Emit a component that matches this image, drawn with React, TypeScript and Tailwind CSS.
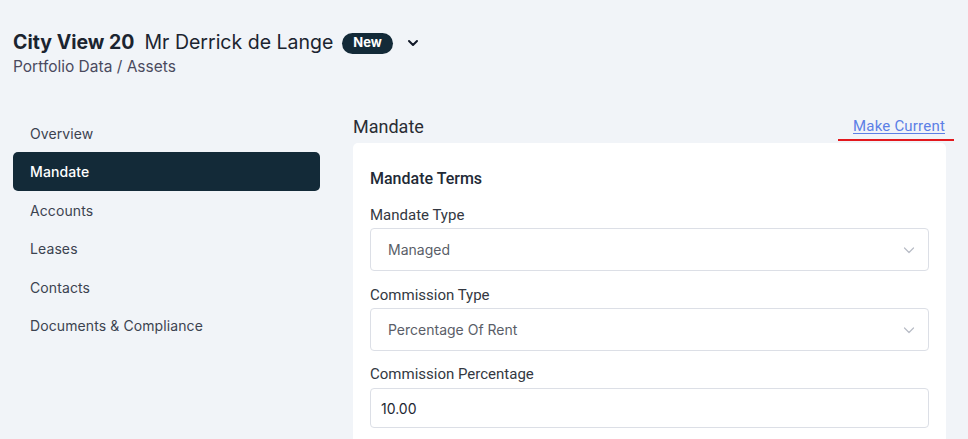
import React from "react";

const Chevron = () => (
  <svg width="14" height="14" viewBox="0 0 14 14" fill="none" className="text-[#b8bcc6]">
    <path d="M2.5 5l4.5 4.5L11.5 5" stroke="currentColor" strokeWidth="1.2" strokeLinecap="round" strokeLinejoin="round" />
  </svg>
);

export default function App() {
  const nav = ["Overview", "Mandate", "Accounts", "Leases", "Contacts", "Documents & Compliance"];
  return (
    <div className="h-[439px] w-[968px] bg-[#f1f4f8] font-['Inter',sans-serif] overflow-hidden">
      <div className="px-[13px] pt-[29px]">
        <div className="flex items-center h-[28px]">
          <span className="text-[19.5px] font-bold text-[#1b2430]">City View 20</span>
          <span className="ml-[10px] text-[19.5px] text-[#1b2430]">Mr Derrick de Lange</span>
          <span className="ml-[9px] h-[21px] px-[11px] rounded-full bg-[#132a38] text-white text-[13px] font-bold flex items-center">New</span>
          <svg className="ml-[13px]" width="14" height="14" viewBox="0 0 14 14" fill="none">
            <path d="M3 5l4 4 4-4" stroke="#111827" strokeWidth="2" strokeLinecap="round" strokeLinejoin="round" />
          </svg>
        </div>
        <div className="text-[15.5px] leading-[20px] text-[#4a4a5e]">Portfolio Data / Assets</div>
      </div>

      <div className="flex pl-[13px] pr-[22px] mt-[32px]">
        <div className="w-[307px] flex flex-col pt-[5px]">
          {nav.map((n) => (
            <div
              key={n}
              className={
                "h-[39px] -my-[0.25px] flex items-center pl-[17px] rounded-[5px] text-[14px] tracking-[0.1px] " +
                (n === "Mandate" ? "bg-[#132a38] text-white font-medium" : "text-[#3c4350]")
              }
            >
              {n}
            </div>
          ))}
        </div>

        <div className="ml-[33px] flex-1 flex flex-col">
          <div className="relative flex items-center justify-between h-[34px] font-['Roboto',sans-serif]">
            <span className="text-[18px] text-[#2a2d34]">Mandate</span>
            <span className="mr-[1px] text-[15px] tracking-[0.2px] text-[#5c7fe6] underline underline-offset-2">Make Current</span>
            <div className="absolute right-[-8px] bottom-[2px] w-[116px] h-[2px] bg-[#e3181d]" />
          </div>
          <div className="bg-white rounded-t-[5px] px-[17px] pt-[26px] pb-[20px] font-['Roboto',sans-serif]">
            <div className="text-[16px] leading-[20px] font-medium text-[#222a36]">Mandate Terms</div>
            <div className="mt-[16px] text-[15px] leading-[20px] text-[#333842]">Mandate Type</div>
            <div className="mt-[3px] h-[43px] border border-[#dcdfe6] rounded-[4px] flex items-center justify-between pl-[17px] pr-[12px]">
              <span className="text-[14px] text-[#5a5e68] font-['Inter',sans-serif]">Managed</span>
              <Chevron />
            </div>
            <div className="mt-[14px] text-[15px] leading-[20px] text-[#333842]">Commission Type</div>
            <div className="mt-[3px] h-[43px] border border-[#dcdfe6] rounded-[4px] flex items-center justify-between pl-[17px] pr-[12px]">
              <span className="text-[14px] text-[#5a5e68] font-['Inter',sans-serif]">Percentage Of Rent</span>
              <Chevron />
            </div>
            <div className="mt-[13px] text-[15px] leading-[20px] text-[#333842]">Commission Percentage</div>
            <div className="mt-[4px] h-[40px] border border-[#dcdfe6] rounded-[4px] flex items-center pl-[10px]">
              <span className="text-[14px] text-[#1e2633] font-['Inter',sans-serif]">10.00</span>
            </div>
          </div>
        </div>
      </div>
    </div>
  );
}
